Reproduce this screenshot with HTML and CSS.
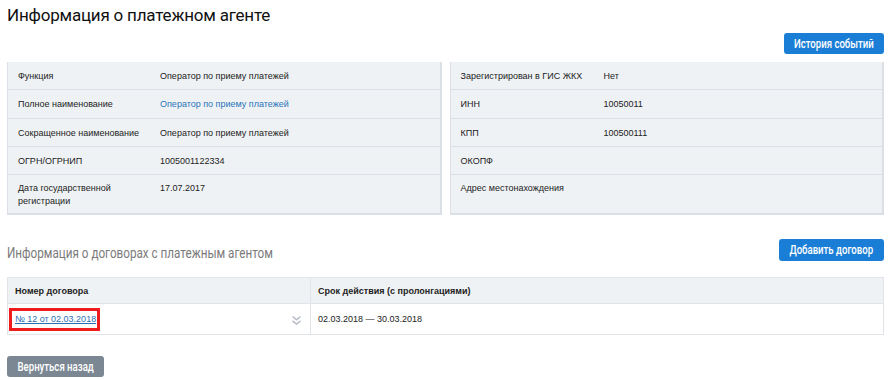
FILE: index.html
```html
<!DOCTYPE html>
<html lang="ru">
<head>
  <meta charset="UTF-8" />
  <title>Информация о платежном агенте</title>
  <link rel="stylesheet" href="styles.css">
</head>
<body>
  <div class="page">
    <h1 class="page-title">Информация о платежном агенте</h1>
    <div class="toolbar">
      <button class="btn btn-blue btn-history"><span class="btn-text">История событий</span></button>
    </div>
    <div class="panels">
      <div class="panel">
        <div class="row"><div class="label">Функция</div><div class="value">Оператор по приему платежей</div></div>
        <div class="row"><div class="label">Полное наименование</div><div class="value link">Оператор по приему платежей</div></div>
        <div class="row"><div class="label">Сокращенное наименование</div><div class="value">Оператор по приему платежей</div></div>
        <div class="row"><div class="label">ОГРН/ОГРНИП</div><div class="value">1005001122334</div></div>
        <div class="row row-last"><div class="label">Дата государственной<br>регистрации</div><div class="value">17.07.2017</div></div>
      </div>
      <div class="panel">
        <div class="row"><div class="label">Зарегистрирован в ГИС ЖКХ</div><div class="value">Нет</div></div>
        <div class="row"><div class="label">ИНН</div><div class="value">10050011</div></div>
        <div class="row"><div class="label">КПП</div><div class="value">100500111</div></div>
        <div class="row"><div class="label">ОКОПФ</div><div class="value"></div></div>
        <div class="row row-last"><div class="label">Адрес местонахождения</div><div class="value"></div></div>
      </div>
    </div>

    <div class="section-head">
      <h2 class="section-title">Информация о договорах с платежным агентом</h2>
      <button class="btn btn-blue btn-add"><span class="btn-text">Добавить договор</span></button>
    </div>

    <table class="contracts">
      <thead>
        <tr><th class="col-num">Номер договора</th><th>Срок действия (с пролонгациями)</th></tr>
      </thead>
      <tbody>
        <tr>
          <td class="col-num">
            <div class="num-cell">
              <span class="selected"><a class="contract-link" href="#">№ 12 от 02.03.2018</a></span>
              <svg class="chev" width="11" height="11" viewBox="0 0 11 11"><path d="M1.5 1.5l4 3.3 4-3.3M1.5 5.8l4 3.3 4-3.3" fill="none" stroke="#b5bcc4" stroke-width="1.5"/></svg>
            </div>
          </td>
          <td>02.03.2018 — 30.03.2018</td>
        </tr>
      </tbody>
    </table>

    <button class="btn btn-grey"><span class="btn-text">Вернуться назад</span></button>
  </div>
</body>
</html>
```

FILE: styles.css
```css
* { box-sizing: border-box; }
body {
  margin: 0;
  font-family: "Liberation Sans", Arial, sans-serif;
  font-size: 9px;
  color: #222;
  background: #fff;
}
.page {
  margin-left: 7px;
  width: 877px;
}
.page-title {
  margin: 0 0 8px;
  padding-top: 5px;
  line-height: 20px;
  font-family: Roboto, sans-serif;
  font-weight: 400;
  font-size: 17px;
  letter-spacing: -0.2px;
  color: #111;
}
.toolbar {
  display: flex;
  justify-content: flex-end;
  height: 29px;
}
.btn {
  border: none;
  border-radius: 3px;
  color: #fff;
  font-family: Roboto, sans-serif;
  font-weight: 500;
  font-size: 12px;
  height: 21px;
  padding: 0;
  white-space: nowrap;
  cursor: pointer;
}
/* condensed look for button captions */
.btn-text {
  display: inline-block;
  transform: scaleX(0.8);
}
.btn-blue { background: #1b7ed6; }
.btn-history { width: 100px; }
.btn-add { width: 105px; height: 22px; }
.btn-grey { background: #7b8893; margin-top: 21px; width: 97px; }
.panels {
  display: flex;
  gap: 8px;
}
.panel {
  flex: 1;
  background: #eff2f5;
  border-left: 1px solid #dbe0e6;
  border-right: 2px solid #dbe0e6;
  border-bottom: 2px solid #dbe0e6;
}
.row {
  display: flex;
  align-items: center;
  height: 28.3px;
  border-bottom: 1px solid #dbe0e6;
  padding: 2px 10px 0;
  line-height: 13px;
}
.row-last {
  border-bottom: none;
  align-items: flex-start;
  height: 38px;
  padding-top: 7px;
}
.label { width: 142px; padding-right: 6px; }
.panel:last-child .label { width: 143px; }
.value { flex: 1; }
.link { color: #2a74b8; }
.section-head {
  display: flex;
  justify-content: space-between;
  align-items: center;
  margin-top: 24px;
  height: 22px;
}
.section-title {
  margin: 0;
  padding-top: 6px;
  font-family: Roboto, sans-serif;
  font-weight: 400;
  font-size: 14px;
  white-space: nowrap;
  transform: scaleX(0.835);
  transform-origin: left center;
  color: #7a7a7a;
}
.contracts {
  margin-top: 16px;
  width: 100%;
  border-collapse: collapse;
  border: 1px solid #e1e5ea;
}
.contracts th {
  background: #eff2f5;
  font-weight: 700;
  text-align: left;
  height: 26px;
  padding: 0 7px;
  border-bottom: 1px solid #e1e5ea;
  border-right: 1px solid #e1e5ea;
}
.contracts td {
  height: 31px;
  padding: 0 7px;
  border-right: 1px solid #e1e5ea;
}
.col-num { width: 303px; }
.num-cell {
  display: flex;
  align-items: center;
  justify-content: space-between;
}
.selected {
  border: 3px solid #ee1c1c;
  padding: 3px 1px 3px 3px;
  margin-left: -6px;
  line-height: 11px;
}
.contract-link {
  color: #2a6fb5;
  text-decoration: underline;
}
.chev { margin-right: 1px; margin-top: 2px; }
```
